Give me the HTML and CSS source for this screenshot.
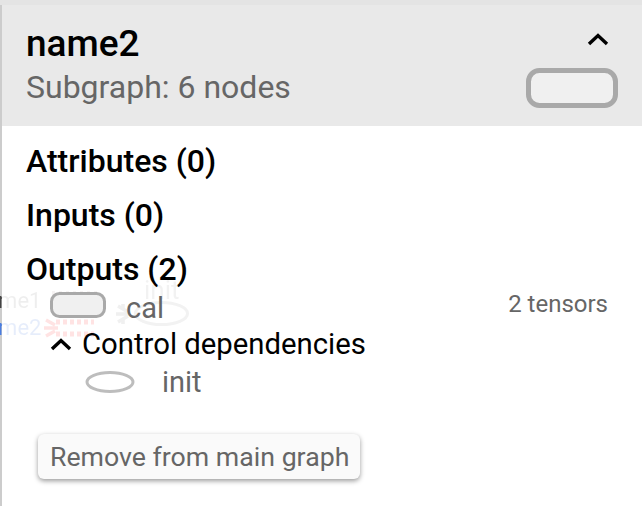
FILE: index.html
```html
<!DOCTYPE html>
<html>
<head>
    <meta charset="UTF-8">
    <title>Node info</title>
    <link rel="stylesheet" href="styles.css">
</head>
<body>
    <div class="panel">
        <div class="header">
            <div class="header-text">
                <div class="title">name2</div>
                <div class="subtitle">Subgraph: 6 nodes</div>
            </div>
            <div class="header-side">
                <svg class="chevron" width="22" height="14" viewBox="0 0 22 14" fill="none" stroke="#000" stroke-width="3.4">
                    <path d="M2 12L11 3.5L20 12"/>
                </svg>
                <svg class="shape-large" width="92" height="40" viewBox="0 0 92 40">
                    <rect x="2.5" y="2.5" width="87" height="35" rx="11" fill="#f0f0f0" stroke="#a9a9a9" stroke-width="5"/>
                </svg>
            </div>
        </div>
        <div class="body">
            <div class="section">Attributes (0)</div>
            <div class="section">Inputs (0)</div>
            <div class="section">Outputs (2)</div>
            <div class="output-row">
                <svg width="56" height="26" viewBox="0 0 56 26">
                    <rect x="1.5" y="1.5" width="53" height="23" rx="8" fill="#f0f0f0" stroke="#a9a9a9" stroke-width="3"/>
                </svg>
                <span class="node-name">cal</span>
                <span class="tensors">2 tensors</span>
            </div>
            <div class="deps-row">
                <svg width="22" height="14" viewBox="0 0 22 14" fill="none" stroke="#000" stroke-width="3.4">
                    <path d="M2 12L11 3.5L20 12"/>
                </svg>
                <span>Control dependencies</span>
            </div>
            <div class="dep-item">
                <svg width="50" height="22" viewBox="0 0 50 22">
                    <ellipse cx="25" cy="11" rx="23" ry="9.5" fill="#fff" stroke="#bdbdbd" stroke-width="3"/>
                </svg>
                <span class="node-name">init</span>
            </div>
            <button class="remove-btn">Remove from main graph</button>
        </div>
        <!-- graph showing through behind the panel -->
        <div class="ghost ghost-name1">name1</div>
        <div class="ghost ghost-name2">name2</div>
        <div class="ghost ghost-init">init</div>
        <svg class="ghost-graph" width="190" height="60" viewBox="0 0 190 60" fill="none">
            <path d="M54 37H92M54 49H92" stroke="#ffe3e3" stroke-width="5" stroke-dasharray="4 3"/>
            <path d="M44 35L53 40M42 43H56M44 51L53 46" stroke="#ffe3e3" stroke-width="3.5"/>
            <path d="M50 8H96" stroke="#f6f3f3" stroke-width="4" stroke-dasharray="3 4"/>
            <path d="M116 21L126 27M114 29H128M116 37L126 31M121 19V25M121 33V39" stroke="#f0f0f0" stroke-width="3.5"/>
            <ellipse cx="159.500" cy="28.500" rx="26" ry="11" stroke="#f2f2f2" stroke-width="3"/>
        </svg>
    </div>
</body>
</html>
```

FILE: styles.css
```css
* {
    margin: 0;
    padding: 0;
    box-sizing: border-box;
    font-family: Roboto, sans-serif;
}

body {
    width: 642px;
    height: 506px;
    overflow: hidden;
    background: #e4e4e4;
    padding-top: 5px;
}

.panel {
    position: relative;
    height: 501px;
    background: #fff;
    border-left: 2px solid #cccccc;
}

.header {
    display: flex;
    justify-content: space-between;
    height: 121px;
    padding: 19px 24px 0 24px;
    background: #e9e9e9;
}

.title {
    font-size: 37px;
    line-height: 40px;
    font-weight: 500;
    color: #000;
}

.subtitle {
    margin-top: 3px;
    font-size: 32px;
    line-height: 40px;
    color: #666;
}

.header-side {
    display: flex;
    flex-direction: column;
    align-items: flex-end;
}

.chevron {
    margin-top: 8px;
    margin-right: 9px;
    margin-bottom: 22px;
}

.body {
    position: relative;
    z-index: 1;
    padding: 14px 0 0 24px;
}

.section {
    height: 54px;
    font-size: 32px;
    line-height: 42px;
    font-weight: 500;
    color: #000;
}

.output-row {
    display: flex;
    align-items: center;
    height: 34px;
    margin-top: -12px;
    padding-right: 34px;
    padding-left: 24px;
}

.output-row svg {
    margin-top: -4px;
}

.node-name {
    font-size: 29px;
    color: #666;
}

.output-row .node-name {
    margin-left: 20px;
    margin-top: 2px;
}

.tensors {
    margin-left: auto;
    margin-top: -6px;
    font-size: 24px;
    color: #666;
}

.deps-row {
    display: flex;
    align-items: center;
    gap: 10px;
    height: 40px;
    padding-left: 24px;
    font-size: 29.3px;
    color: #000;
}

.dep-item {
    display: flex;
    align-items: center;
    gap: 27px;
    height: 36px;
    padding-left: 59px;
}

.remove-btn {
    display: block;
    height: 45px;
    margin: 34px 0 0 12px;
    padding: 0 11px 0 12px;
    border: none;
    border-radius: 6px;
    background: #fafafa;
    box-shadow: 0 2px 5px rgba(0, 0, 0, 0.4);
    font-size: 26.7px;
    color: #666;
}

.ghost {
    position: absolute;
    left: -28px;
    font-size: 22px;
    background-clip: text;
    -webkit-background-clip: text;
    color: transparent;
}

.ghost-name1 {
    top: 283px;
    background-image: linear-gradient(90deg, #444 28px, #eeeeee 28px);
}

.ghost-name2 {
    top: 310px;
    background-image: linear-gradient(90deg, #4a7de0 28px, #e6edfb 28px);
}

.ghost-init {
    top: 270px;
    left: 142px;
    font-size: 26px;
    background-image: linear-gradient(#f2f2f2, #f2f2f2);
}

.ghost-graph {
    position: absolute;
    top: 280px;
    left: 0;
}
```
